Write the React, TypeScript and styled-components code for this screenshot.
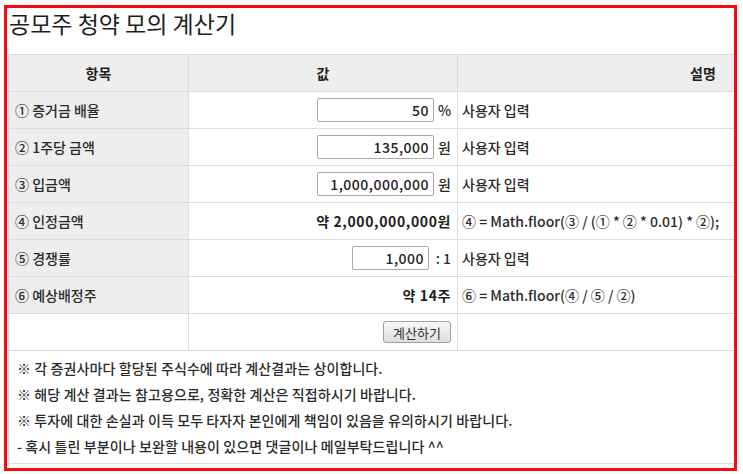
import styled, { createGlobalStyle } from 'styled-components'

const GlobalStyle = createGlobalStyle`
  body {
    margin: 0;
    background: #fff;
    font-family: "Noto Sans CJK KR", "Noto Sans", sans-serif;
    color: #2a2a2a;
  }
`

interface Row {
  label: string
  input?: { value: string; width: number; unit: string; unitWidth: number }
  result?: string
  note: string
}

const rows: Row[] = [
  { label: '① 증거금 배율', input: { value: '50', width: 117, unit: '%', unitWidth: 13 }, note: '사용자 입력' },
  { label: '② 1주당 금액', input: { value: '135,000', width: 117, unit: '원', unitWidth: 13 }, note: '사용자 입력' },
  { label: '③ 입금액', input: { value: '1,000,000,000', width: 117, unit: '원', unitWidth: 13 }, note: '사용자 입력' },
  { label: '④ 인정금액', result: '약 2,000,000,000원', note: '④ = Math.floor(③ / (① * ② * 0.01) * ②);' },
  { label: '⑤ 경쟁률', input: { value: '1,000', width: 77, unit: ': 1', unitWidth: 18 }, note: '사용자 입력' },
  { label: '⑥ 예상배정주', result: '약 14주', note: '⑥ = Math.floor(④ / ⑤ / ②)' },
]

const notices = [
  '※ 각 증권사마다 할당된 주식수에 따라 계산결과는 상이합니다.',
  '※ 해당 계산 결과는 참고용으로, 정확한 계산은 직접하시기 바랍니다.',
  '※ 투자에 대한 손실과 이득 모두 타자자 본인에게 책임이 있음을 유의하시기 바랍니다.',
  '- 혹시 틀린 부분이나 보완할 내용이 있으면 댓글이나 메일부탁드립니다 ^^',
]

export default function App() {
  return (
    <>
      <GlobalStyle />
      <Frame>
        <Title>공모주 청약 모의 계산기</Title>
        <CalcTable>
          <colgroup>
            <col style={{ width: 180 }} />
            <col style={{ width: 269 }} />
            <col />
          </colgroup>
          <thead>
            <tr>
              <HeadCell>항목</HeadCell>
              <HeadCell>값</HeadCell>
              <HeadCell>설명</HeadCell>
            </tr>
          </thead>
          <tbody>
            {rows.map((row) => (
              <tr key={row.label}>
                <LabelCell>{row.label}</LabelCell>
                <ValueCell>
                  {row.input ? (
                    <InputWrap>
                      <NumberInput
                        readOnly
                        value={row.input.value}
                        $width={row.input.width}
                      />
                      <Unit $width={row.input.unitWidth}>{row.input.unit}</Unit>
                    </InputWrap>
                  ) : (
                    <Result>{row.result}</Result>
                  )}
                </ValueCell>
                <NoteCell>{row.note}</NoteCell>
              </tr>
            ))}
            <tr>
              <PlainCell />
              <ValueCell>
                <CalcButton type="button">계산하기</CalcButton>
              </ValueCell>
              <PlainCell />
            </tr>
            <tr>
              <NoticeCell colSpan={3}>
                {notices.map((n) => (
                  <NoticeLine key={n}>{n}</NoticeLine>
                ))}
              </NoticeCell>
            </tr>
          </tbody>
        </CalcTable>
      </Frame>
    </>
  )
}

const Frame = styled.div`
  box-sizing: border-box;
  margin: 5px 0 0 4px;
  width: 733px;
  height: 466px;
  border: 3px solid #f50a14;
  overflow: hidden;
`

const Title = styled.h2`
  margin: 0 0 16px;
  padding-left: 2px;
  height: 30px;
  font-size: 23px;
  line-height: 30px;
  font-weight: 400;
  color: #1e1e1e;
`

const CalcTable = styled.table`
  margin-left: 1px;
  width: 941px;
  table-layout: fixed;
  border-collapse: collapse;
  font-size: 14px;
`

const Cell = styled.td`
  height: 36px;
  padding: 0 6px;
  border: 1px solid #dcdcdc;
  vertical-align: middle;
  white-space: nowrap;
`

const HeadCell = styled(Cell).attrs({ as: 'th' })`
  background: #eeeeee;
  font-size: 14px;
  font-weight: 700;
  text-align: center;
  color: #1e1e1e;
`

const LabelCell = styled(Cell)`
  background: #eeeeee;
  font-weight: 500;
`

const ValueCell = styled(Cell)`
  text-align: right;
`

const NoteCell = styled(Cell)`
  padding-left: 4px;
  font-weight: 500;
`

const PlainCell = styled(Cell)``

const InputWrap = styled.div`
  display: flex;
  justify-content: flex-end;
  align-items: center;
  gap: 4px;
`

const NumberInput = styled.input<{ $width: number }>`
  box-sizing: border-box;
  width: ${({ $width }) => $width}px;
  height: 24px;
  padding: 0 4px;
  border: 1px solid #a9a9a9;
  border-radius: 2px;
  font-family: inherit;
  font-size: 14px;
  font-weight: 500;
  letter-spacing: 0.5px;
  text-align: right;
  color: #222;
  outline: none;
`

const Unit = styled.span<{ $width: number }>`
  width: ${({ $width }) => $width}px;
  text-align: right;
  font-weight: 500;
`

const Result = styled.span`
  font-weight: 700;
  letter-spacing: 0.6px;
  color: #1e1e1e;
`

const CalcButton = styled.button`
  box-sizing: border-box;
  width: 68px;
  height: 22px;
  padding: 0;
  border: 1px solid #a0a0a0;
  border-radius: 3px;
  background: linear-gradient(#f8f8f8, #dedede);
  font-family: inherit;
  font-size: 13px;
  color: #333;
`

const NoticeCell = styled(Cell)`
  height: auto;
  padding: 4px 8px;
  font-weight: 500;
`

const NoticeLine = styled.div`
  line-height: 26px;
  letter-spacing: 0.1px;
`
